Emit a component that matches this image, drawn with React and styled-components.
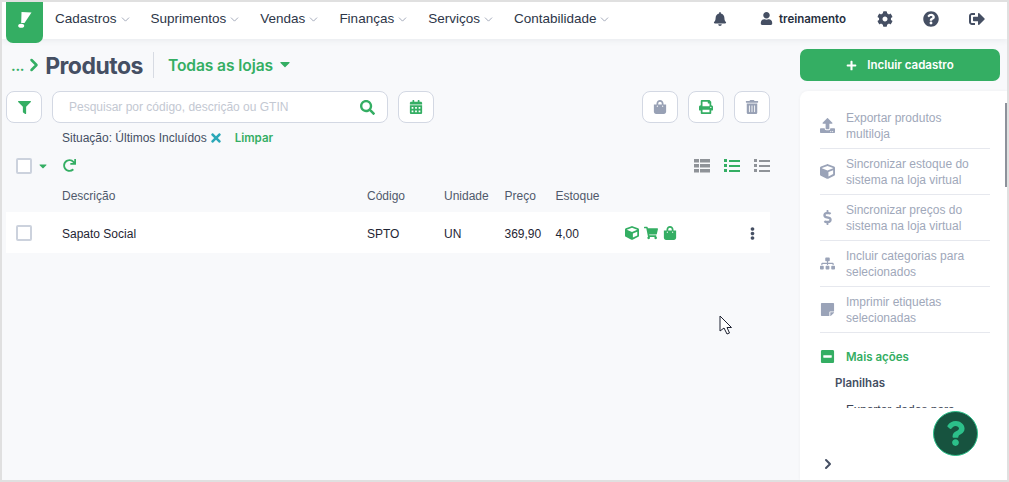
import React from "react";
import styled, { createGlobalStyle } from "styled-components";
import {
  FaBell, FaUser, FaCog, FaQuestionCircle, FaSignOutAlt, FaFilter, FaSearch, FaCalendarAlt,
  FaShoppingBag, FaPrint, FaTrashAlt, FaRedo, FaDollarSign, FaSitemap, FaStickyNote,
  FaMinusSquare, FaQuestion, FaShoppingCart, FaTimes, FaCaretDown, FaPlus, FaCube, FaEllipsisV, FaUpload,
} from "react-icons/fa";
import { ChevronDown, ChevronRight } from "lucide-react";

const green = "#34ae63";
const ink = "#454f63";
const muted = "#a0a8ba";
const head = `"Inter", "Liberation Sans", sans-serif`;

const Global = createGlobalStyle`
  html, body { margin: 0; padding: 0; }
  body { font-family: "Liberation Sans", Arial, sans-serif; background: #f8f9fb; }
  * { box-sizing: border-box; }
`;

const Frame = styled.div`
  position: relative; width: 1009px; height: 482px; overflow: hidden;
  border: 2px solid #e0e0e0;
  background: #f8f9fb; display: flex; flex-direction: column;
`;
const TopBar = styled.header`
  height: 37px; flex: none; background: #fff; display: flex; align-items: flex-start;
  padding-left: 4px; box-shadow: 0 2px 6px rgba(60, 70, 90, .07); position: relative; z-index: 1;
`;
const Logo = styled.div`
  width: 37px; height: 41px; background: ${green}; border-radius: 0 0 7px 7px; padding-bottom: 5px;
  display: flex; align-items: center; justify-content: center; flex: none;
`;
const Menu = styled.nav`display: flex; margin-left: 12px; height: 33px; align-items: center; gap: 19px;`;
const MenuItem = styled.span`
  font-size: 13.5px; color: #2d3648; display: flex; align-items: center; gap: 2px;
  svg { color: #8f98ab; margin-top: 2px; }
`;
const Tools = styled.div`
  margin-left: auto; display: flex; align-items: center; height: 33px; color: ${ink}; margin-right: 22px;
`;
const ToolIcon = styled.span`display: flex; font-size: ${p => p.$size || 16}px; margin-left: ${p => p.$gap || 0}px;`;
const UserName = styled.span`
  display: flex; align-items: center; gap: 6px; margin-left: 33px;
  font: 600 11.5px ${head}; color: #262f40;
  svg { font-size: 13px; color: ${ink}; }
`;
const Body = styled.main`flex: 1; display: flex; min-height: 0; padding-left: 4px;`;
const Content = styled.section`width: 764px; flex: none; display: flex; flex-direction: column;`;
const TitleRow = styled.div`height: 52px; display: flex; align-items: center; padding-left: 5px;`;
const Crumb = styled.span`
  font: 700 14px ${head}; color: ${green}; display: flex; align-items: center; letter-spacing: -.3px;
  svg { color: ${green}; }
`;
const Title = styled.h1`
  margin: 0 0 0 1px; font: 700 23px ${head}; color: ${ink}; letter-spacing: -.5px; padding-top: 2px;
`;
const Divider = styled.span`width: 1px; height: 26px; background: #d7dbe3; margin: 0 14px 0 10px;`;
const Store = styled.span`
  font: 600 15.6px ${head}; color: ${green}; display: flex; align-items: center; gap: 4px; letter-spacing: -.1px;
  svg { font-size: 16px; margin-top: -3px; }
`;
const Toolbar = styled.div`display: flex; align-items: center; gap: 10px;`;
const IconBtn = styled.button`
  width: 36px; height: 32px; padding: 0; border: 1px solid #d3d8e3; border-radius: 8px; background: #fff;
  color: ${p => p.$grey ? "#98a1b5" : green}; font-size: ${p => p.$size || 14}px;
  display: flex; align-items: center; justify-content: center;
`;
const Search = styled.div`
  width: 336px; height: 32px; border: 1px solid #d3d8e3; border-radius: 8px; background: #fff;
  display: flex; align-items: center; justify-content: space-between; padding: 0 12px 0 16px;
  font-size: 12px; color: #c3c8d2; svg { color: ${green}; font-size: 15px; }
`;
const RightTools = styled.div`margin-left: auto; display: flex; gap: 10px;`;
const FilterRow = styled.div`
  height: 30px; display: flex; align-items: center; padding-left: 56px; font-size: 12px; color: ${ink};
`;
const Clear = styled.span`font: 600 11.5px ${head}; color: ${green}; margin-left: 12px;`;
const CloseX = styled(FaTimes)`color: #2ba8b8; font-size: 14px; margin-left: 2px;`;
const ListBar = styled.div`height: 26px; display: flex; align-items: center; padding-left: 10px;`;
const Check = styled.span`
  display: block; width: 16px; height: 16px; border: 2px solid #ccd2dd; border-radius: 2px; background: #fff;
`;
const Caret = styled(FaCaretDown)`color: ${green}; font-size: 12px; margin-left: 5px;`;
const Refresh = styled(FaRedo)`color: ${green}; font-size: 13px; margin-left: 14px; margin-top: -2px;`;
const Views = styled.div`margin-left: auto; display: flex; gap: 14px;`;
const Grid = styled.div`
  display: grid; align-items: center;
  grid-template-columns: 56px 305px 77px 60.5px 51px 69.5px 1fr auto;
  font-size: 12px;
`;
const HeadRow = styled(Grid)`height: 31px; color: #50596b; margin-top: 1px;`;
const Row = styled(Grid)`height: 41px; background: #fff; color: #1f2634; margin-top: 1px;`;
const CellText = styled.span`padding-top: 2px;`;
const CheckCell = styled.span`padding-left: 10px;`;
const StatusIcons = styled.span`display: flex; gap: 5px; color: ${green}; font-size: 14px; align-items: center; padding-top: 1px;`;
const Kebab = styled.span`
  justify-self: end; padding-right: 11px; color: ${ink}; font-size: 13px; display: flex; padding-top: 1px;
`;
const Side = styled.aside`margin-left: 30px; width: 207px; flex: none; display: flex; flex-direction: column;`;
const Primary = styled.button`
  width: 200px; height: 32px; margin-top: 10px; border: 0; border-radius: 7px; background: ${green}; color: #fff;
  font: 600 11.5px ${head}; display: flex; align-items: center; justify-content: center; gap: 10px;
  svg { font-size: 11px; }
`;
const Panel = styled.div`
  position: relative; margin-top: 10px; flex: 1; background: #fff; border-radius: 8px 0 0 0;
  display: flex; flex-direction: column; padding: 12px 0 0 20px; min-height: 0;
  box-shadow: 0 0 3px rgba(60, 70, 90, .06);
`;
const Scrollbar = styled.span`position: absolute; right: 0; top: 12px; width: 2px; height: 84px; background: #8d929b;`;
const Scroll = styled.div`height: 305px; overflow: hidden; width: 170px; flex: none;`;
const Action = styled.div`
  height: 46px; border-bottom: 1px solid #e6e8ee; display: grid; grid-template-columns: 26px 1fr;
  align-items: center; color: ${muted}; font-size: 12px; line-height: 16px;
  svg { font-size: 15px; color: #9aa3b8; }
`;
const More = styled.div`
  display: flex; align-items: center; gap: 11px; height: 47px; font: 600 11.5px ${head}; color: ${green};
  svg { font-size: 15px; }
`;
const Sheets = styled.div`margin-left: 15px; font: 600 11.5px ${head}; color: ${ink}; margin-top: -4px; line-height: 14px;`;
const SheetLink = styled.div`margin: 13px 0 0 26px; font-size: 12px; color: #3a4252; white-space: nowrap;`;
const Expand = styled.span`margin-top: 48px; margin-left: 0; color: ${ink}; display: flex;`;
const Help = styled.button`
  position: absolute; left: 931px; top: 409px; width: 45px; height: 45px; padding: 0; border-radius: 50%;
  background: #17533f; border: 1px solid #2cc08a; color: #2cc08a; display: flex; align-items: center; justify-content: center;
  font-size: 25px; z-index: 3;
`;
const Pointer = styled.svg`position: absolute; left: 717px; top: 313px; z-index: 3;`;

const ViewIcon = ({ color, kind }) => (
  <svg width="16" height="14" viewBox="0 0 16 14">
    {[0, 5, 10].map((y) => (
      <g key={y} fill={color}>
        {kind === "table" ? (
          <><rect x="0" y={y} width="5" height="3.5" /><rect x="6" y={y} width="10" height="3.5" /></>
        ) : (
          <><rect x="0" y={y} width="3" height="3" /><rect x="5" y={y + 1} width="11" height="2" /></>
        )}
      </g>
    ))}
  </svg>
);

const actions = [
  [<FaUpload />, "Exportar produtos", "multiloja"],
  [<FaCube />, "Sincronizar estoque do", "sistema na loja virtual"],
  [<FaDollarSign />, "Sincronizar preços do", "sistema na loja virtual"],
  [<FaSitemap />, "Incluir categorias para", "selecionados"],
  [<FaStickyNote />, "Imprimir etiquetas", "selecionadas"],
];

export default function App() {
  return (
    <Frame>
      <Global />
      <TopBar>
        <Logo>
          <svg width="14" height="16" viewBox="0 0 14 16">
            <path d="M3.5 0 L13.5 0.5 L6.5 11 L3.2 11 Z" fill="#fff" />
            <ellipse cx="3.2" cy="13.8" rx="3" ry="2" fill="#fff" />
          </svg>
        </Logo>
        <Menu>
          {["Cadastros", "Suprimentos", "Vendas", "Finanças", "Serviços", "Contabilidade"].map((m) => (
            <MenuItem key={m}>{m}<ChevronDown size={13} strokeWidth={1.5} /></MenuItem>
          ))}
        </Menu>
        <Tools>
          <ToolIcon $size={14}><FaBell /></ToolIcon>
          <UserName><FaUser />treinamento</UserName>
          <ToolIcon $gap={31}><FaCog /></ToolIcon>
          <ToolIcon $gap={30}><FaQuestionCircle /></ToolIcon>
          <ToolIcon $gap={30}><FaSignOutAlt /></ToolIcon>
        </Tools>
      </TopBar>
      <Body>
        <Content>
          <TitleRow>
            <Crumb>...<ChevronRight size={20} strokeWidth={3} /></Crumb>
            <Title>Produtos</Title>
            <Divider />
            <Store>Todas as lojas <FaCaretDown /></Store>
          </TitleRow>
          <Toolbar>
            <IconBtn $size={13}><FaFilter /></IconBtn>
            <Search>Pesquisar por código, descrição ou GTIN<FaSearch /></Search>
            <IconBtn><FaCalendarAlt /></IconBtn>
            <RightTools>
              <IconBtn $grey><FaShoppingBag /></IconBtn>
              <IconBtn><FaPrint /></IconBtn>
              <IconBtn $grey><FaTrashAlt /></IconBtn>
            </RightTools>
          </Toolbar>
          <FilterRow>Situação: Últimos Incluídos<CloseX /><Clear>Limpar</Clear></FilterRow>
          <ListBar>
            <Check /><Caret /><Refresh />
            <Views>
              <ViewIcon color="#8f9398" kind="table" />
              <ViewIcon color={green} kind="on" />
              <ViewIcon color="#8f9398" kind="off" />
            </Views>
          </ListBar>
          <HeadRow>
            <span /><span>Descrição</span><span>Código</span><span>Unidade</span><span>Preço</span><span>Estoque</span>
          </HeadRow>
          <Row>
            <CheckCell><Check /></CheckCell>
            <CellText>Sapato Social</CellText><CellText>SPTO</CellText><CellText>UN</CellText>
            <CellText>369,90</CellText><CellText>4,00</CellText>
            <StatusIcons><FaCube /><FaShoppingCart /><FaShoppingBag /></StatusIcons>
            <Kebab><FaEllipsisV /></Kebab>
          </Row>
        </Content>
        <Side>
          <Primary><FaPlus />Incluir cadastro</Primary>
          <Panel>
            <Scrollbar />
            <Scroll>
              {actions.map(([icon, a, b]) => (
                <Action key={a + b}>{icon}<span>{a}<br />{b}</span></Action>
              ))}
              <More><FaMinusSquare />Mais ações</More>
              <Sheets>Planilhas</Sheets>
              <SheetLink>Exportar dados para</SheetLink>
            </Scroll>
            <Expand><ChevronRight size={16} strokeWidth={3} /></Expand>
          </Panel>
        </Side>
      </Body>
      <Help><FaQuestion /></Help>
      <Pointer width="14" height="22" viewBox="0 0 14 22">
        <path d="M1 1 L1 16 L5 13 L8 19 L10.5 18 L8 12.5 L12.5 12.5 Z" fill="#fff" stroke="#1d2130" strokeWidth="1" />
      </Pointer>
    </Frame>
  );
}
